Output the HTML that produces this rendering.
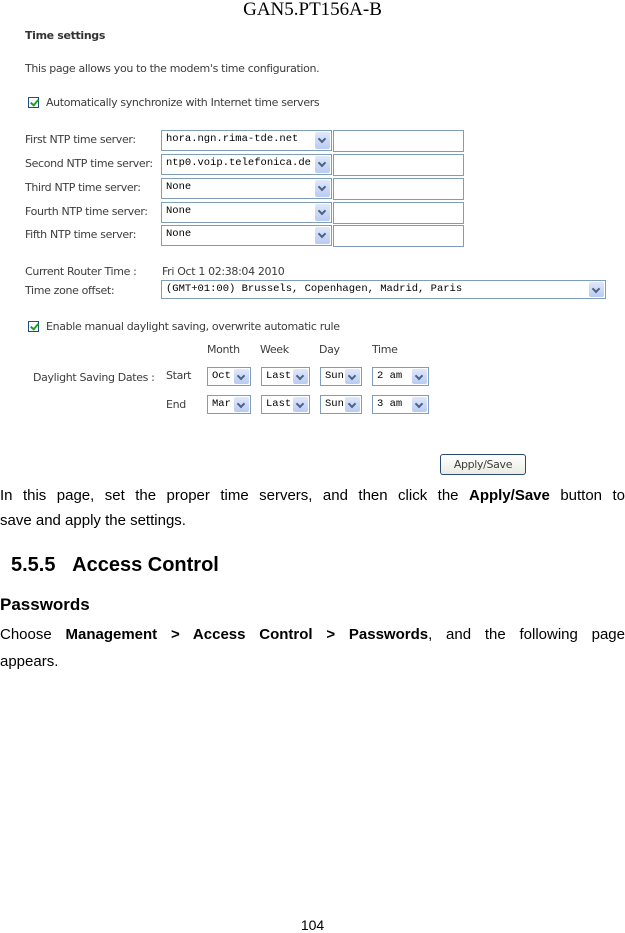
<!DOCTYPE html>
<html><head><meta charset="utf-8"><style>
body{margin:0;width:625px;height:931px;background:#fff;position:relative;overflow:hidden;font-family:"Liberation Sans",sans-serif}
.a{position:absolute;white-space:nowrap}
.ui{font-family:"DejaVu Sans","Liberation Sans",sans-serif;font-size:11px;color:#3c3c3c;letter-spacing:-0.35px}
.sel{position:absolute;border:1px solid #7f9db9;background:#fff;box-sizing:border-box;font-family:"Liberation Mono",monospace;font-size:10.5px;color:#000;padding:2px 0 0 4px;white-space:nowrap;overflow:hidden}
.sel i{position:absolute;right:1px;top:1px;bottom:1px;width:15px;background:linear-gradient(#dfe8fb,#b9cbf3);border-radius:2px}
.sel i:after{content:"";position:absolute;left:4px;top:4px;width:4px;height:4px;border-right:2px solid #4d6185;border-bottom:2px solid #4d6185;transform:rotate(45deg)}
.tb{position:absolute;border:1px solid #7f9db9;box-sizing:border-box;background:#fff}
.cb{position:absolute;width:11px;height:11px;border:1px solid #1c5180;box-sizing:border-box;background:#fff}
.cb:after{content:"";position:absolute;left:3px;top:0px;width:3px;height:6px;border-right:2px solid #21a121;border-bottom:2px solid #21a121;transform:rotate(40deg)}
.p{font-size:15px;color:#000;position:absolute;left:0;width:625px;text-align:justify;text-align-last:justify;white-space:nowrap}
</style></head><body>
<div class="a" style="left:0;width:625px;text-align:center;top:-1px;font-family:'Liberation Serif',serif;font-size:19px">GAN5.PT156A-B</div>
<div class="a ui" style="left:25px;top:29px;font-weight:bold;color:#333">Time settings</div>
<div class="a ui" style="left:25px;top:62px">This page allows you to the modem's time configuration.</div>
<div class="cb" style="left:28px;top:97px"></div>
<div class="a ui" style="left:46px;top:96px">Automatically synchronize with Internet time servers</div>

<div class="a ui" style="left:25px;top:133px">First NTP time server:</div>
<div class="a ui" style="left:25px;top:157px">Second NTP time server:</div>
<div class="a ui" style="left:25px;top:181px">Third NTP time server:</div>
<div class="a ui" style="left:25px;top:205px">Fourth NTP time server:</div>
<div class="a ui" style="left:25px;top:228px">Fifth NTP time server:</div>

<div class="sel" style="left:161px;top:130px;width:171px;height:21px">hora.ngn.rima-tde.net<i></i></div>
<div class="sel" style="left:161px;top:154px;width:171px;height:21px">ntp0.voip.telefonica.de<i></i></div>
<div class="sel" style="left:161px;top:178px;width:171px;height:21px">None<i></i></div>
<div class="sel" style="left:161px;top:202px;width:171px;height:21px">None<i></i></div>
<div class="sel" style="left:161px;top:225px;width:171px;height:21px">None<i></i></div>
<div class="tb" style="left:333px;top:130px;width:131px;height:22px"></div>
<div class="tb" style="left:333px;top:154px;width:131px;height:22px"></div>
<div class="tb" style="left:333px;top:178px;width:131px;height:22px"></div>
<div class="tb" style="left:333px;top:202px;width:131px;height:22px"></div>
<div class="tb" style="left:333px;top:225px;width:131px;height:22px"></div>

<div class="a ui" style="left:25px;top:265px">Current Router Time :</div>
<div class="a ui" style="left:162px;top:265px">Fri Oct 1 02:38:04 2010</div>
<div class="a ui" style="left:25px;top:284px">Time zone offset:</div>
<div class="sel" style="left:161px;top:280px;width:445px;height:19px;padding-top:2px">(GMT+01:00) Brussels, Copenhagen, Madrid, Paris<i></i></div>

<div class="cb" style="left:28px;top:321px"></div>
<div class="a ui" style="left:46px;top:320px">Enable manual daylight saving, overwrite automatic rule</div>
<div class="a ui" style="left:207px;top:343px">Month</div>
<div class="a ui" style="left:260px;top:343px">Week</div>
<div class="a ui" style="left:319px;top:343px">Day</div>
<div class="a ui" style="left:372px;top:343px">Time</div>
<div class="a ui" style="left:33px;top:371px">Daylight Saving Dates :</div>
<div class="a ui" style="left:166px;top:369px">Start</div>
<div class="a ui" style="left:166px;top:398px">End</div>

<div class="sel" style="left:207px;top:367px;width:44px;height:19px;padding-top:2px">Oct<i></i></div>
<div class="sel" style="left:261px;top:367px;width:49px;height:19px;padding-top:2px">Last<i></i></div>
<div class="sel" style="left:320px;top:367px;width:42px;height:19px;padding-top:2px">Sun<i></i></div>
<div class="sel" style="left:372px;top:367px;width:57px;height:19px;padding-top:2px">2 am<i></i></div>
<div class="sel" style="left:207px;top:395px;width:44px;height:19px;padding-top:2px">Mar<i></i></div>
<div class="sel" style="left:261px;top:395px;width:49px;height:19px;padding-top:2px">Last<i></i></div>
<div class="sel" style="left:320px;top:395px;width:42px;height:19px;padding-top:2px">Sun<i></i></div>
<div class="sel" style="left:372px;top:395px;width:57px;height:19px;padding-top:2px">3 am<i></i></div>

<div class="a ui" style="left:440px;top:454px;width:86px;height:21px;box-sizing:border-box;border:1px solid #2a4a70;border-radius:3px;background:linear-gradient(#fff,#ecebe4);text-align:center;line-height:19px">Apply/Save</div>

<div class="p" style="top:487px">In this page, set the proper time servers, and then click the <b>Apply/Save</b> button to</div>
<div class="a" style="left:0;top:512px;font-size:15px">save and apply the settings.</div>
<div class="a" style="left:11px;top:554px;font-size:20px;font-weight:bold">5.5.5&nbsp;&nbsp;&nbsp;Access Control</div>
<div class="a" style="left:0;top:595px;font-size:17px;font-weight:bold">Passwords</div>
<div class="p" style="top:626px">Choose <b>Management &gt; Access Control &gt; Passwords</b>, and the following page</div>
<div class="a" style="left:0;top:653px;font-size:15px">appears.</div>
<div class="a" style="left:0;width:625px;text-align:center;top:917px;font-size:14px">104</div>
</body></html>
